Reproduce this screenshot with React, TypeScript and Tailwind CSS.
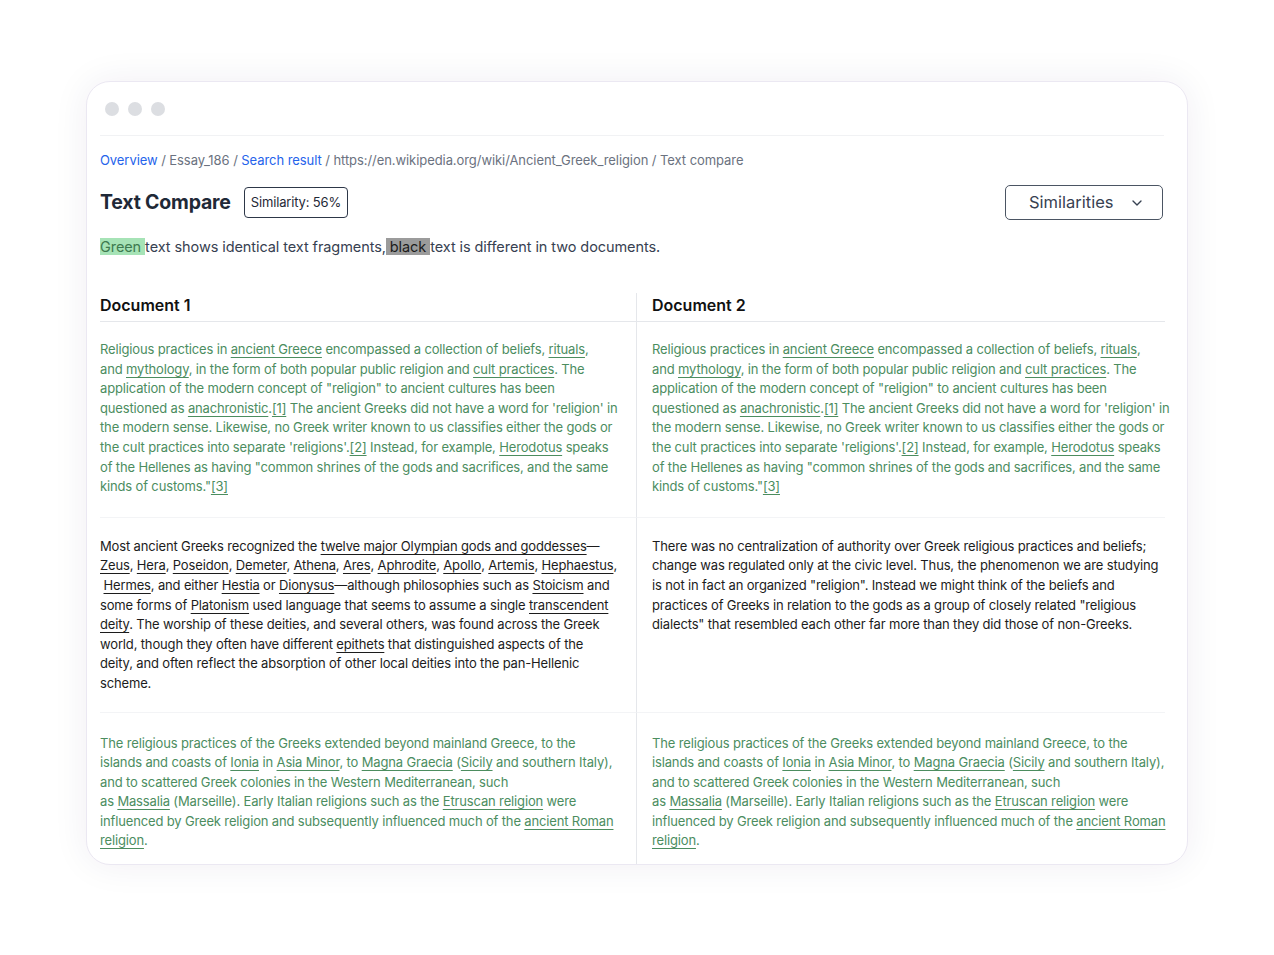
import React from 'react';
import { ChevronDown } from 'lucide-react';

// {link text} renders as an underlined link, | is a line break
const renderText = (s: string) =>
  s.split(/(\{[^}]+\}|\|)/).map((part, i) => {
    if (part === '|') return <br key={i} />;
    if (part.startsWith('{'))
      return (
        <a key={i} className="underline decoration-1 underline-offset-[3px]">
          {part.slice(1, -1)}
        </a>
      );
    return <React.Fragment key={i}>{part}</React.Fragment>;
  });

const P1 =
  'Religious practices in {ancient Greece} encompassed a collection of beliefs, {rituals},|and {mythology}, in the form of both popular public religion and {cult practices}. The application of the modern concept of "religion" to ancient cultures has been questioned as {anachronistic}.{[1]} The ancient Greeks did not have a word for \'religion\' in the modern sense. Likewise, no Greek writer known to us classifies either the gods or the cult practices into separate \'religions\'.{[2]} Instead, for example, {Herodotus} speaks of the Hellenes as having "common shrines of the gods and sacrifices, and the same kinds of customs."{[3]}';

const P2_LEFT =
  'Most ancient Greeks recognized the {twelve major Olympian gods and goddesses}—{Zeus}, {Hera}, {Poseidon}, {Demeter}, {Athena}, {Ares}, {Aphrodite}, {Apollo}, {Artemis}, {Hephaestus}, \u00a0{Hermes}, and either {Hestia} or {Dionysus}—although philosophies such as {Stoicism} and some forms of {Platonism} used language that seems to assume a single {transcendent deity}. The worship of these deities, and several others, was found across the Greek world, though they often have different {epithets} that distinguished aspects of the deity, and often reflect the absorption of other local deities into the pan-Hellenic scheme.';

const P2_RIGHT =
  'There was no centralization of authority over Greek religious practices and beliefs; change was regulated only at the civic level. Thus, the phenomenon we are studying is not in fact an organized "religion". Instead we might think of the beliefs and practices of Greeks in relation to the gods as a group of closely related "religious dialects" that resembled each other far more than they did those of non-Greeks.';

const P3 =
  'The religious practices of the Greeks extended beyond mainland Greece, to the islands and coasts of {Ionia} in {Asia Minor}, to {Magna Graecia} ({Sicily} and southern Italy), and to scattered Greek colonies in the Western Mediterranean, such|as {Massalia} (Marseille). Early Italian religions such as the {Etruscan religion} were influenced by Greek religion and subsequently influenced much of the {ancient Roman religion}.';

const green = 'text-[#4c8d5f]';
const black = 'text-[#1c1c1c]';

const App: React.FC = () => {
  const cellL = 'pr-4';
  const cellR = 'border-l border-[#e5e7eb] pl-[15px]';
  const para = 'w-[518px] text-[13px] leading-[19.6px] tracking-[-0.15px]';

  return (
    <div className="min-h-[955px] bg-white pt-[81px] pl-[86px] font-['Inter',sans-serif]">
      <div className="w-[1102px] h-[784px] rounded-[24px] border border-[#ebe8f2] bg-white shadow-[0_0_36px_rgba(40,30,80,0.07)] pl-[13px] pr-[23px] overflow-hidden">
        {/* window dots */}
        <div className="flex gap-[9px] mt-[20px] ml-[5px]">
          <span className="w-[14px] h-[14px] rounded-full bg-[#dcdee2]" />
          <span className="w-[14px] h-[14px] rounded-full bg-[#dcdee2]" />
          <span className="w-[14px] h-[14px] rounded-full bg-[#dcdee2]" />
        </div>
        <div className="mt-[19px] border-t border-[#f1f2f4]" />

        {/* breadcrumb */}
        <div className="mt-[14px] text-[13px] leading-5 tracking-[-0.07px] text-[#6b7280]">
          <a className="text-[#2563eb]">Overview</a> / Essay_186 /{' '}
          <a className="text-[#2563eb]">Search result</a> / https://en.wikipedia.org/wiki/Ancient_Greek_religion / Text compare
        </div>

        {/* title row */}
        <div className="mt-[15px] flex items-center justify-between h-[35px]">
          <div className="flex items-center gap-[13px]">
            <h1 className="text-[19.5px] font-bold text-[#1f2937] tracking-[-0.2px]">Text Compare</h1>
            <span className="h-[31px] px-[6px] flex items-center rounded-[4px] border-[1.5px] border-[#2d3748] text-[13px] tracking-[-0.15px] text-[#1f2937]">
              Similarity: 56%
            </span>
          </div>
          <button className="w-[158px] h-[35px] mr-[1px] flex items-center justify-between rounded-[5px] border-[1.5px] border-[#4b5563] pl-[23px] pr-[17px] text-[16.5px] text-[#374151]">
            Similarities
            <ChevronDown size={16} strokeWidth={2} className="text-[#374151]" />
          </button>
        </div>

        {/* legend */}
        <div className="mt-[16px] text-[14.5px] leading-[22px] tracking-[-0.08px] text-[#374151]">
          <span className="bg-[#a6e3b6] text-[#3d7a4f]">Green </span>text shows identical text fragments,
          <span className="bg-[#9b9b9b] text-[#1c1c1c]"> black </span>text is different in two documents.
        </div>

        {/* documents */}
        <div className="mt-[35px] grid grid-cols-[536px_529px]">
          <div className={`${cellL} h-[29px] border-b border-[#e5e7eb] text-[16px] leading-6 font-semibold text-[#111111]`}>
            Document 1
          </div>
          <div className={`${cellR} h-[29px] border-b border-[#e5e7eb] text-[16px] leading-6 font-semibold text-[#111111]`}>
            Document 2
          </div>

          <div className={`${cellL} pt-[18px] pb-[20px]`}>
            <p className={`${para} ${green}`}>{renderText(P1)}</p>
          </div>
          <div className={`${cellR} pt-[18px] pb-[20px]`}>
            <p className={`${para} ${green}`}>{renderText(P1)}</p>
          </div>

          <div className={`${cellL} border-t border-[#f3f4f6] pt-[19px] pb-[18px]`}>
            <p className={`${para} ${black}`}>{renderText(P2_LEFT)}</p>
          </div>
          <div className={`${cellR} border-t border-t-[#f3f4f6] pt-[19px] pb-[18px]`}>
            <p className={`${para} ${black}`}>{renderText(P2_RIGHT)}</p>
          </div>

          <div className={`${cellL} border-t border-[#f3f4f6] pt-[21px] pb-[20px]`}>
            <p className={`${para} ${green}`}>{renderText(P3)}</p>
          </div>
          <div className={`${cellR} border-t border-t-[#f3f4f6] pt-[21px] pb-[20px]`}>
            <p className={`${para} ${green}`}>{renderText(P3)}</p>
          </div>
        </div>
      </div>
    </div>
  );
};

export default App;
